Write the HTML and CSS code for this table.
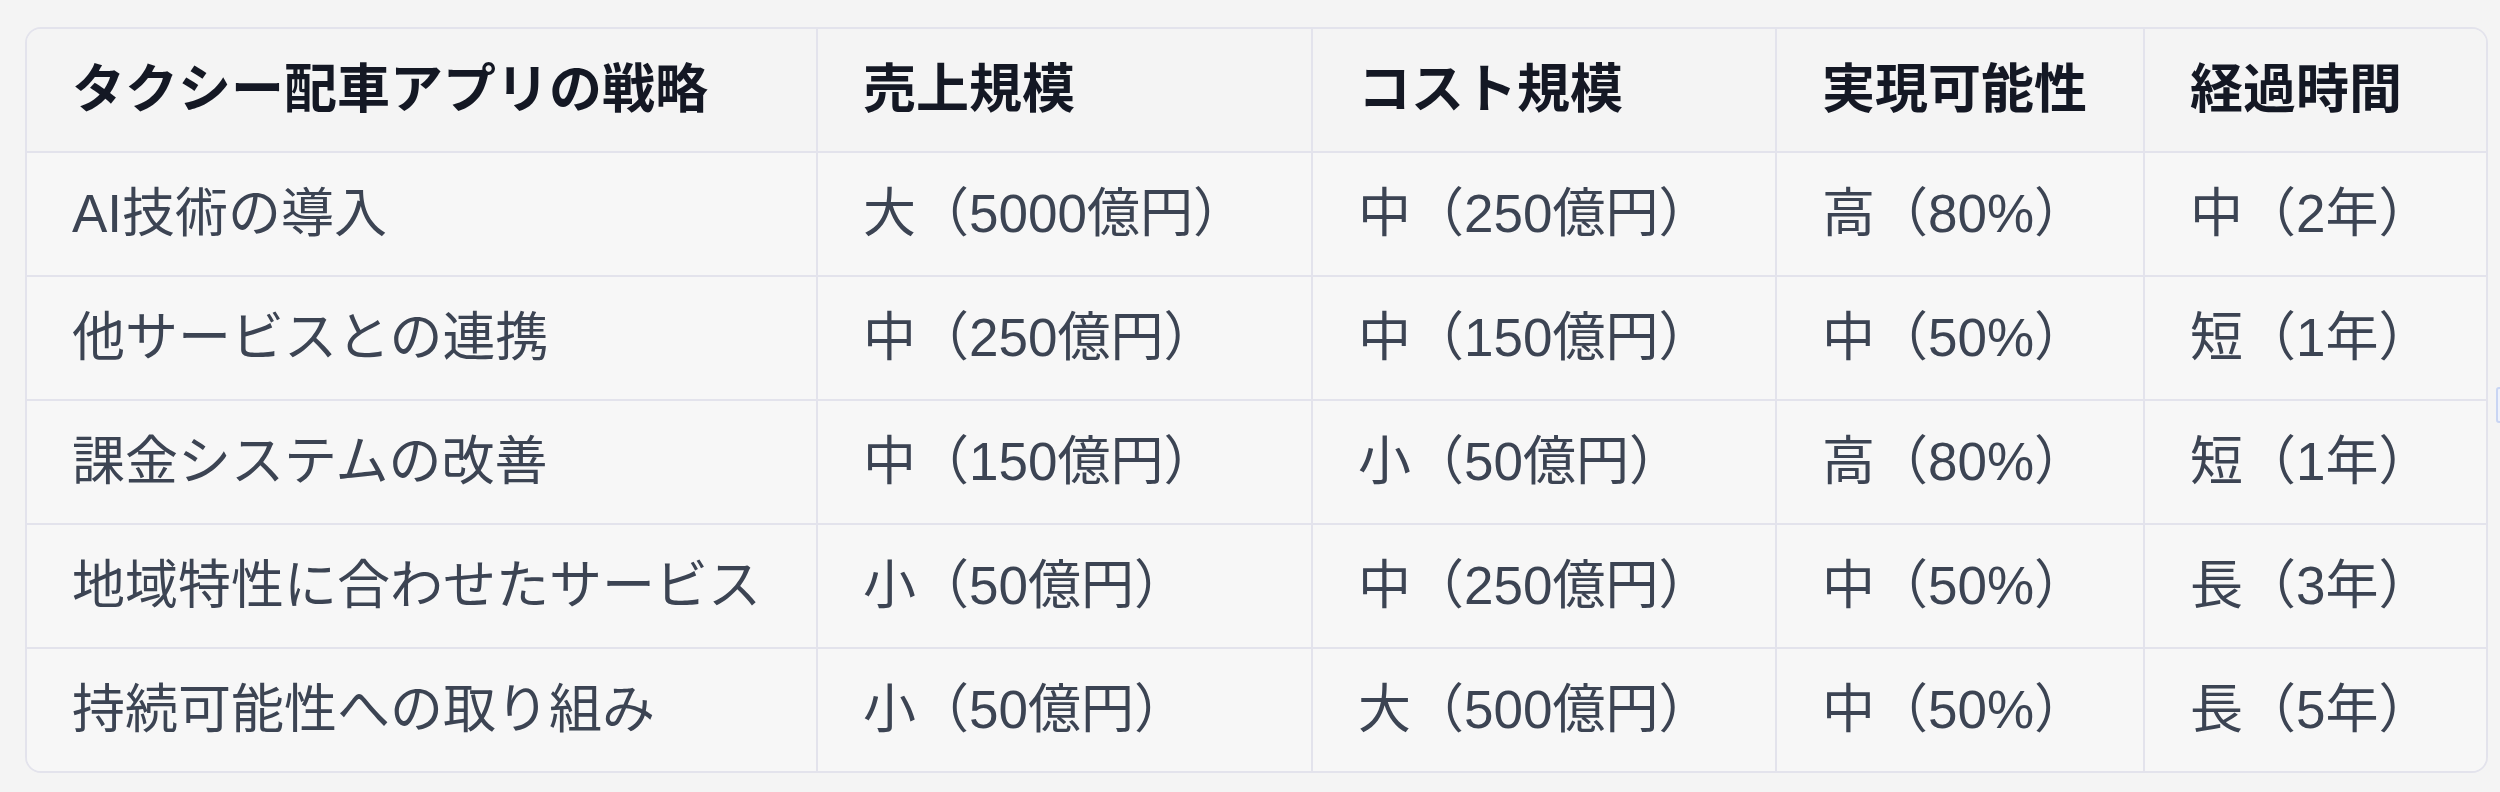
FILE: index.html
```html
<!DOCTYPE html>
<html lang="ja">
<head>
<meta charset="utf-8">
<title>タクシー配車アプリの戦略</title>
<link rel="stylesheet" href="styles.css">
</head>
<body>
<div class="table-wrap">
  <table class="strategy">
    <thead>
      <tr>
        <th class="c1">タクシー配車アプリの戦略</th>
        <th class="c2">売上規模</th>
        <th class="c3">コスト規模</th>
        <th class="c4">実現可能性</th>
        <th class="c5">経過時間</th>
      </tr>
    </thead>
    <tbody>
      <tr>
        <td>AI技術の導入</td>
        <td>大（5000億円）</td>
        <td>中（250億円）</td>
        <td>高（80%）</td>
        <td>中（2年）</td>
      </tr>
      <tr>
        <td>他サービスとの連携</td>
        <td>中（250億円）</td>
        <td>中（150億円）</td>
        <td>中（50%）</td>
        <td>短（1年）</td>
      </tr>
      <tr>
        <td>課金システムの改善</td>
        <td>中（150億円）</td>
        <td>小（50億円）</td>
        <td>高（80%）</td>
        <td>短（1年）</td>
      </tr>
      <tr>
        <td>地域特性に合わせたサービス</td>
        <td>小（50億円）</td>
        <td>中（250億円）</td>
        <td>中（50%）</td>
        <td>長（3年）</td>
      </tr>
      <tr>
        <td>持続可能性への取り組み</td>
        <td>小（50億円）</td>
        <td>大（500億円）</td>
        <td>中（50%）</td>
        <td>長（5年）</td>
      </tr>
    </tbody>
  </table>
</div>
<div class="edge-tab"></div>
</body>
</html>
```
FILE: styles.css
```css
html, body {
  margin: 0;
  padding: 0;
  background: #f4f4f4;
}

body {
  width: 2500px;
  height: 792px;
  overflow: hidden;
  position: relative;
  font-family: "Liberation Sans", "Noto Sans CJK JP", sans-serif;
}

.table-wrap {
  margin: 27px 0 0 25px;
  width: 2463px;
  box-sizing: border-box;
  border: 2px solid #e3e3ec;
  border-radius: 16px;
  overflow: hidden;
  background: #f7f7f7;
}

.strategy {
  width: 2459px;
  table-layout: fixed;
  border-collapse: separate;
  border-spacing: 0;
}

.strategy th,
.strategy td {
  box-sizing: border-box;
  height: 124px;
  padding: 0 16px 0 45px;
  border-right: 2px solid #e3e3ec;
  border-bottom: 2px solid #e3e3ec;
  text-align: left;
  vertical-align: middle;
  font-size: 53px;
  line-height: 1.2;
  white-space: nowrap;
}

.strategy th:last-child,
.strategy td:last-child {
  border-right: none;
}

.strategy tbody tr:last-child td {
  border-bottom: none;
  height: 122px;
}

.strategy th {
  background: #f4f4f4;
  color: #141824;
  font-weight: 700;
}

.strategy td {
  background: #f7f7f7;
  color: #3c4453;
  font-weight: 400;
}

.strategy .c1 { width: 791px; }
.strategy .c2 { width: 495px; }
.strategy .c3 { width: 464px; }
.strategy .c4 { width: 368px; }
.strategy .c5 { width: 341px; }

.edge-tab {
  position: absolute;
  left: 2496px;
  top: 387px;
  width: 20px;
  height: 36px;
  box-sizing: border-box;
  border: 2px solid #c9d5f3;
  border-radius: 3px;
  background: #eef2fb;
}
```
